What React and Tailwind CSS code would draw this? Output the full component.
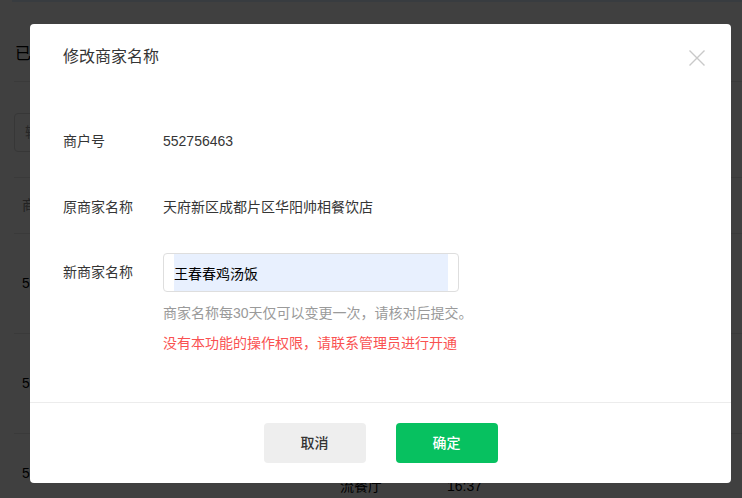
export default function App() {
  return (
    <div className="relative w-full h-[498px] overflow-hidden bg-white font-['Liberation_Sans','Noto_Sans_CJK_SC',sans-serif] text-[14px] text-black">
      {/* page behind the dialog */}
      <div className="h-[2px] ml-[12px] bg-[#e0f0ff]" />
      <div className="pl-[14px]">
        <div className="h-[79px] flex items-center pl-[1px] pt-[25px]">
          <span className="text-[16px]">已开通商户</span>
        </div>
        <div className="border-t border-[#e8e8e8] pt-[31px] pb-[25px]">
          <div className="w-[300px] h-[39px] border border-[#d9d9d9] rounded-[4px] flex items-center px-[10px] text-[#999]">
            输入商户号搜索
          </div>
        </div>
        <div className="border-t border-[#e8e8e8] h-[56px] flex items-center px-[8px] text-[#888]">
          <span className="w-[318px]">商户号</span>
          <span className="w-[107px]">商家名称</span>
          <span>开通时间</span>
        </div>
        <div className="border-t border-[#e8e8e8] h-[100px] flex items-center px-[8px]">
          <span className="w-[318px]">552756463</span>
          <span className="w-[107px]">帅相餐饮店</span>
          <span>16:37</span>
        </div>
        <div className="border-t border-[#e8e8e8] h-[100px] flex items-center px-[8px]">
          <span className="w-[318px]">552756412</span>
          <span className="w-[107px]">华阳餐厅</span>
          <span>16:37</span>
        </div>
        <div className="border-t border-[#e8e8e8] h-[80px] flex items-center px-[8px]">
          <span className="w-[318px]">552756401</span>
          <div className="w-[107px] leading-[22px] pt-[3px]">
            <div>华阳春熙风</div>
            <div>流餐厅</div>
          </div>
          <div className="leading-[22px] pt-[3px]">
            <div>2023-06-12</div>
            <div>16:37</div>
          </div>
        </div>
      </div>

      {/* mask */}
      <div className="absolute inset-0 bg-black/75" />

      {/* dialog */}
      <div className="absolute left-[30px] top-[24px] w-[701px] h-[459px] bg-white rounded-[4px] flex flex-col text-[#353535]">
        <div className="relative h-[66px] flex items-center px-[33px]">
          <h2 className="text-[16px] leading-[24px] font-normal">修改商家名称</h2>
          <button className="absolute right-[26px] top-[26px] w-[16px] h-[16px]">
            <svg viewBox="0 0 16 16" width="16" height="16" fill="none" stroke="#c9c9c9" strokeWidth="1.4">
              <path d="M0.5 0.5L15.5 15.5M15.5 0.5L0.5 15.5" />
            </svg>
          </button>
        </div>

        <div className="pt-[32px] px-[33px] flex-1">
          <div className="flex items-center h-[38px]">
            <span className="w-[100px]">商户号</span>
            <span>552756463</span>
          </div>
          <div className="flex items-center h-[38px] mt-[28px]">
            <span className="w-[100px]">原商家名称</span>
            <span>天府新区成都片区华阳帅相餐饮店</span>
          </div>
          <div className="flex items-start mt-[27px]">
            <span className="w-[100px] h-[39px] flex items-center">新商家名称</span>
            <div>
              <div className="w-[296px] h-[39px] border border-[#dedede] rounded-[4px] px-[10px]">
                <input
                  readOnly
                  value="王春春鸡汤饭"
                  className="w-full h-full bg-[#e8f0fe] text-black outline-none text-[14px]"
                />
              </div>
              <p className="mt-[10px] leading-[22px] text-[#9a9a9a]">
                商家名称每30天仅可以变更一次，请核对后提交。
              </p>
              <p className="mt-[8px] leading-[22px] text-[#fa5151]">
                没有本功能的操作权限，请联系管理员进行开通
              </p>
            </div>
          </div>
        </div>

        <div className="border-t border-[#ececec] h-[81px] flex items-center justify-center gap-[30px]">
          <button className="w-[102px] h-[40px] rounded-[4px] bg-[#eeeeee] text-[#333] font-medium">
            取消
          </button>
          <button className="w-[102px] h-[40px] rounded-[4px] bg-[#07c160] text-white font-medium">
            确定
          </button>
        </div>
      </div>
    </div>
  );
}
